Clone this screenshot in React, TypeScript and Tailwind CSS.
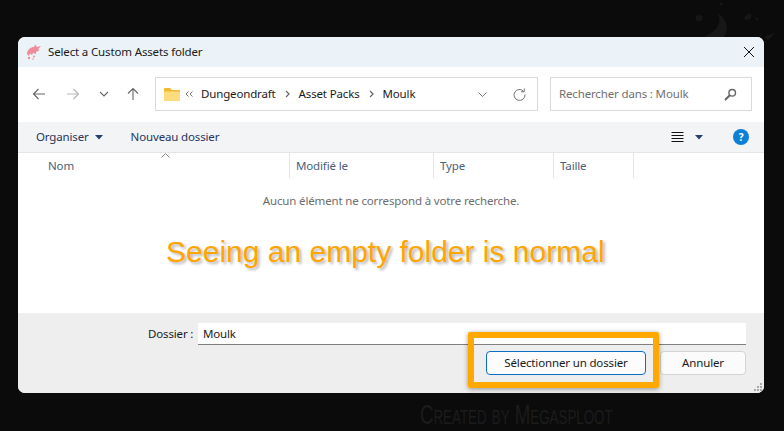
import React from "react";

const font = { fontFamily: '"Noto Sans", "Open Sans", sans-serif' };

function HeaderCell({ label, cls }: { label: string; cls: string }) {
  return (
    <div className={`${cls} h-[25px] shrink-0 border-r border-[#e5e5e5] flex items-center pl-[6px] text-[11.5px] tracking-[-0.15px] text-[#4c607a]`}>
      {label}
    </div>
  );
}

export default function App() {
  return (
    <div className="relative w-[784px] h-[431px] overflow-hidden bg-[#0b0b0b] pt-[37px] pl-[18px]" style={font}>
      {/* faint background logo */}
      <svg className="absolute left-[680px] top-0" width="104" height="40" viewBox="0 0 104 40" fill="#171717">
        <ellipse cx="19" cy="18" rx="3.5" ry="3" />
        <path d="M37 13 C42 20 40 30 24 37 L44 37 C50 28 46 18 37 13Z" />
        <ellipse cx="68" cy="17" rx="4" ry="2.5" transform="rotate(-35 68 17)" />
        <circle cx="77" cy="19" r="1.5" />
        <circle cx="41" cy="4" r="1.5" />
        <path d="M84 37 L96 32 L88 40Z" />
      </svg>

      <div className="relative flex flex-col w-[746px] h-[356px] rounded-[7px] overflow-hidden bg-white">
        {/* title bar */}
        <div className="flex items-center h-[30px] shrink-0 bg-[#ebf3f8] pl-[8px] pr-[9px]">
          <svg width="16" height="16" viewBox="0 0 16 16" fill="#ee8c9a" className="shrink-0">
            <path d="M1 9 C2 5 5 3 8 3 L9 0.5 L11 3 L15 2 L12 5.5 L14 6 L10 8 L10 10 L7 9 L6 11 L4 9.5 L3 12 L1.5 11Z" />
            <circle cx="3" cy="14" r="1.2" />
            <circle cx="8" cy="12.5" r="1" />
            <circle cx="7" cy="15" r="0.8" />
          </svg>
          <span className="ml-[6px] text-[11.5px] tracking-[-0.15px] leading-none text-[#1a1a1a]">Select a Custom Assets folder</span>
          <svg width="12" height="12" viewBox="0 0 12 12" className="ml-auto" stroke="#111" strokeWidth="1" fill="none">
            <path d="M1 1 L11 11 M11 1 L1 11" />
          </svg>
        </div>

        {/* address toolbar */}
        <div className="flex items-center h-[55px] shrink-0 pb-[1px] pl-[14px]">
          <svg width="14" height="14" viewBox="0 0 14 14" fill="none" stroke="#666" strokeWidth="1.1" className="shrink-0">
            <path d="M13 7 H1.5 M6.5 2 L1.5 7 L6.5 12" />
          </svg>
          <svg width="14" height="14" viewBox="0 0 14 14" fill="none" stroke="#b5b5b5" strokeWidth="1.1" className="ml-[20px] shrink-0">
            <path d="M1 7 H12.5 M7.5 2 L12.5 7 L7.5 12" />
          </svg>
          <svg width="10" height="6" viewBox="0 0 10 6" fill="none" stroke="#666" strokeWidth="1.1" className="ml-[19px] shrink-0">
            <path d="M1 1 L5 5 L9 1" />
          </svg>
          <svg width="14" height="14" viewBox="0 0 14 14" fill="none" stroke="#666" strokeWidth="1.1" className="ml-[17px] shrink-0">
            <path d="M7 13 V1.5 M2 6.5 L7 1.5 L12 6.5" />
          </svg>
          <div className="ml-[15px] flex items-center w-[383px] h-[34px] shrink-0 border border-[#d9d9d9] pl-[8px] text-[11.5px] tracking-[-0.15px] text-[#1a1a1a]">
            <svg width="16" height="14" viewBox="0 0 16 14" className="shrink-0">
              <path d="M0 2 Q0 1 1 1 H6 L8 3 H15 Q16 3 16 4 V13 Q16 14 15 14 H1 Q0 14 0 13Z" fill="#f2bb30" />
              <rect x="0" y="4.5" width="16" height="9.5" rx="1" fill="#fcdc7c" />
            </svg>
            <svg width="8" height="6" viewBox="0 0 8 6" fill="none" stroke="#777" className="ml-[5px]">
              <path d="M3.5 0.5 L1 3 L3.5 5.5 M7.5 0.5 L5 3 L7.5 5.5" />
            </svg>
            <span className="ml-[8px]">Dungeondraft</span>
            <svg width="5" height="8" viewBox="0 0 5 8" fill="none" stroke="#666" strokeWidth="1.2" className="ml-[9px]">
              <path d="M1 1 L4 4 L1 7" />
            </svg>
            <span className="ml-[9px]">Asset Packs</span>
            <svg width="5" height="8" viewBox="0 0 5 8" fill="none" stroke="#666" strokeWidth="1.2" className="ml-[9px]">
              <path d="M1 1 L4 4 L1 7" />
            </svg>
            <span className="ml-[9px]">Moulk</span>
            <svg width="9" height="5" viewBox="0 0 9 5" fill="none" stroke="#777" className="ml-auto">
              <path d="M0.5 0.5 L4.5 4.5 L8.5 0.5" />
            </svg>
            <svg width="13" height="13" viewBox="0 0 13 13" fill="none" stroke="#777" strokeWidth="1" className="ml-[26px] mr-[11px]">
              <path d="M10.8 3.5 A5.5 5.5 0 1 0 12 6.5 M11.3 0.5 V3.8 H8" />
            </svg>
          </div>
          <div className="ml-[12px] flex items-center w-[202px] h-[34px] shrink-0 border border-[#d9d9d9] pl-[8px] text-[11.5px] tracking-[-0.15px] text-[#6f6f6f]">
            Rechercher dans : Moulk
            <svg width="13" height="13" viewBox="0 0 13 13" fill="none" stroke="#666" className="ml-auto mr-[14px]">
              <circle cx="8.2" cy="4.8" r="3.3" strokeWidth="1.4" />
              <path d="M5.8 7.2 L1 12" strokeWidth="2" />
            </svg>
          </div>
        </div>

        {/* command bar */}
        <div className="flex items-center h-[31px] shrink-0 bg-[#f3f4f6] border-b border-[#e3e5e7] pl-[18px] text-[11.5px] tracking-[-0.15px] text-[#26365e]">
          <span>Organiser</span>
          <svg width="8" height="5" viewBox="0 0 8 5" fill="#26406b" className="ml-[6px]">
            <path d="M0 0 H8 L4 4.5Z" />
          </svg>
          <span className="ml-[28px]">Nouveau dossier</span>
          <svg width="13" height="11" viewBox="0 0 13 11" stroke="#111" strokeWidth="1" className="ml-auto">
            <path d="M0.5 0.5 H12.5 M0.5 3.5 H12.5 M0.5 6.5 H12.5 M0.5 9.5 H12.5" />
          </svg>
          <svg width="8" height="5" viewBox="0 0 8 5" fill="#26406b" className="ml-[11px]">
            <path d="M0 0 H8 L4 4.5Z" />
          </svg>
          <div className="ml-[30px] mr-[15px] flex items-center justify-center w-[16px] h-[16px] rounded-full bg-[#0f7fd6] text-white text-[10px] font-bold leading-none">
            ?
          </div>
        </div>

        {/* column header */}
        <div className="relative flex h-[25px] shrink-0">
          <div className="w-[272px] h-[25px] shrink-0 border-r border-[#e5e5e5] flex items-center pl-[30px] text-[11.5px] tracking-[-0.15px] text-[#4c607a]">
            Nom
          </div>
          <HeaderCell label="Modifié le" cls="w-[144px]" />
          <HeaderCell label="Type" cls="w-[120px]" />
          <HeaderCell label="Taille" cls="w-[80px]" />
          <svg width="9" height="5" viewBox="0 0 9 5" fill="none" stroke="#888" className="absolute left-[143px] top-0">
            <path d="M0.5 4.5 L4.5 0.5 L8.5 4.5" />
          </svg>
        </div>

        {/* list body */}
        <div className="flex-1 pt-[15px] text-center text-[11.5px] tracking-[-0.15px] leading-[16px] text-[#6d6d6d]">
          Aucun élément ne correspond à votre recherche.
        </div>

        {/* footer */}
        <div className="relative h-[80px] shrink-0 bg-[#eeeeee] pt-[10px] text-[11.5px] tracking-[-0.15px] text-[#1a1a1a]">
          <div className="flex items-center h-[22px] pl-[130px]">
            <span className="w-[50px] shrink-0">Dossier :</span>
            <div className="flex items-center w-[548px] h-[22px] bg-white border-b border-[#808080] pl-[5px]">Moulk</div>
          </div>
          <div className="flex justify-end gap-[14px] pr-[18px] mt-[6px]">
            <div className="flex items-center justify-center w-[160px] h-[24px] rounded-[4px] border border-[#0a6fc2] bg-[#fcfcfc]">
              Sélectionner un dossier
            </div>
            <div className="flex items-center justify-center w-[86px] h-[24px] rounded-[4px] border border-[#d4d4d4] bg-[#fbfbfb]">
              Annuler
            </div>
          </div>
          <svg width="10" height="10" viewBox="0 0 10 10" fill="#a8a8a8" className="absolute right-[1px] bottom-[1px]">
            <rect x="7" y="1" width="2" height="2" />
            <rect x="4" y="4" width="2" height="2" />
            <rect x="7" y="4" width="2" height="2" />
            <rect x="1" y="7" width="2" height="2" />
            <rect x="4" y="7" width="2" height="2" />
            <rect x="7" y="7" width="2" height="2" />
          </svg>
        </div>

        {/* annotations */}
        <div
          className="absolute left-[148px] top-[197px] text-[30px] leading-[36px] whitespace-nowrap text-[#ffa500] [text-shadow:2px_2px_3px_rgba(0,0,0,0.3)]"
          style={{ fontFamily: '"Liberation Sans", Arial, sans-serif' }}
        >
          Seeing an empty folder is normal
        </div>
        <div className="absolute left-[450px] top-[295px] w-[191px] h-[56px] border-[6px] border-[#ffa800] rounded-[2px] shadow-[0_1px_5px_rgba(0,0,0,0.4)]" />
      </div>

      {/* watermark */}
      <div
        className="absolute left-[420px] top-[401px] origin-left scale-x-[0.667] text-[28px] leading-[28px] whitespace-nowrap text-[#1c1c1c] [font-variant:small-caps]"
        style={{ fontFamily: '"Liberation Sans", sans-serif' }}
      >
        Created by Megasploot
      </div>
    </div>
  );
}
